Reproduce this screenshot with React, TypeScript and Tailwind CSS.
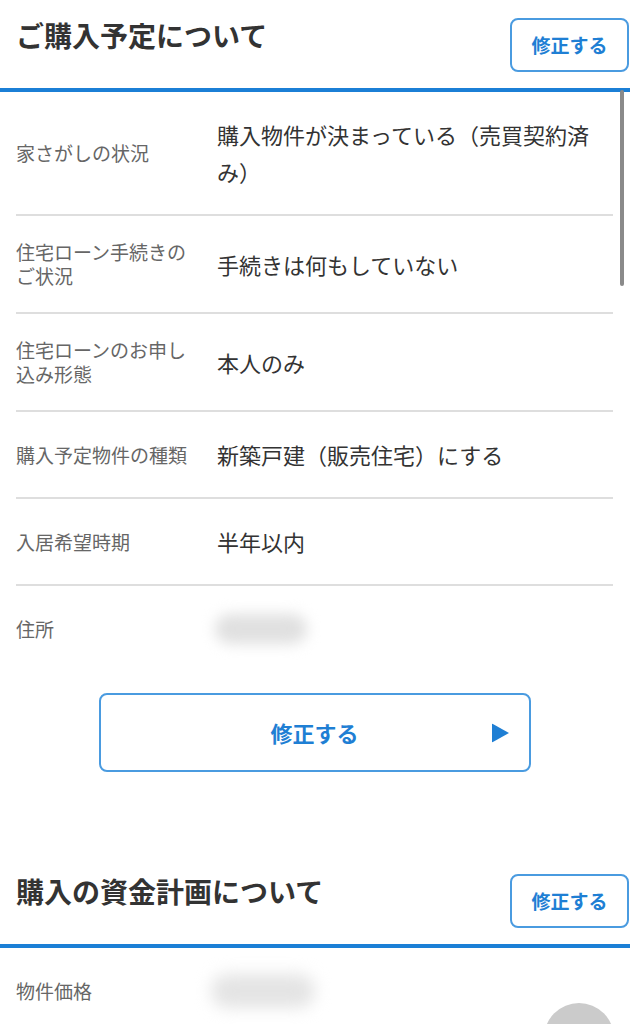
import React from "react";

const FONT = '"Noto Sans CJK JP", "Noto Sans", sans-serif';

type Row = { label: string; value?: string; blur?: boolean };

const planRows: Row[] = [
  { label: "家さがしの状況", value: "購入物件が決まっている（売買契約済み）" },
  { label: "住宅ローン手続きのご状況", value: "手続きは何もしていない" },
  { label: "住宅ローンのお申し込み形態", value: "本人のみ" },
  { label: "購入予定物件の種類", value: "新築戸建（販売住宅）にする" },
  { label: "入居希望時期", value: "半年以内" },
  { label: "住所", blur: true },
];

function SectionHeader({ title }: { title: string }) {
  return (
    <div>
      <div className="flex h-[88px] items-start justify-between pl-4 pr-px pt-[17px]">
        <h2 className="text-[28px] font-bold leading-[36px] text-[#333]">{title}</h2>
        <button
          type="button"
          className="mt-px flex h-[54px] w-[119px] items-center justify-center rounded-[8px] border-2 border-[#4a9be0] bg-white text-[19px] font-bold text-[#1f7fd4]"
        >
          修正する
        </button>
      </div>
      <div className="h-[4px] bg-[#1b7fd6]" />
    </div>
  );
}

function InfoRow({ row, last }: { row: Row; last?: boolean }) {
  return (
    <div
      className={`flex items-center gap-[15px] py-6 ${last ? "" : "border-b-2 border-[#dedede]"}`}
    >
      <div className="w-[186px] shrink-0 text-[19px] leading-[24px] text-[#666]">{row.label}</div>
      {row.blur ? (
        <div className="flex h-[37px] items-center">
          <div className="ml-[-2px] h-[30px] w-[92px] rounded-full bg-[#e0e0e0] blur-[7px]" />
        </div>
      ) : (
        <div className="min-w-0 flex-1 text-[22px] leading-[37px] text-[#333]">{row.value}</div>
      )}
    </div>
  );
}

export default function App() {
  return (
    <div className="relative h-[1024px] overflow-hidden bg-white" style={{ fontFamily: FONT }}>
      <SectionHeader title="ご購入予定について" />
      <div className="pl-4 pr-[17px]">
        {planRows.map((row, i) => (
          <InfoRow key={row.label} row={row} last={i === planRows.length - 1} />
        ))}
      </div>

      <div className="flex justify-center pb-[84px] pt-[22px]">
        <button
          type="button"
          className="relative ml-[-1px] flex h-[79px] w-[432px] items-center justify-center rounded-[8px] border-2 border-[#4a9be0] bg-white text-[22px] font-bold text-[#1f7fd4]"
        >
          修正する
          <svg
            className="absolute right-[20px] top-1/2 -translate-y-1/2"
            width="17"
            height="19"
            viewBox="0 0 17 19"
          >
            <path d="M0 0 L17 9.5 L0 19 Z" fill="#1f7fd4" />
          </svg>
        </button>
      </div>

      <SectionHeader title="購入の資金計画について" />
      <div className="pl-4 pr-[17px]">
        <div className="flex items-center gap-[15px] py-6">
          <div className="w-[186px] shrink-0 text-[19px] leading-[24px] text-[#666]">物件価格</div>
          <div className="flex h-[37px] items-center">
            <div className="ml-[-6px] h-[34px] w-[104px] rounded-full bg-[#e4e4e4] blur-[8px]" />
          </div>
        </div>
      </div>

      {/* scrollbar */}
      <div className="absolute left-[620px] top-[90px] h-[196px] w-[4px] rounded-full bg-[#8a8a8a]" />
      {/* floating button peeking at bottom */}
      <div className="absolute left-[544px] top-[1003px] h-[70px] w-[70px] rounded-full bg-[#cbcbcb]" />
    </div>
  );
}
